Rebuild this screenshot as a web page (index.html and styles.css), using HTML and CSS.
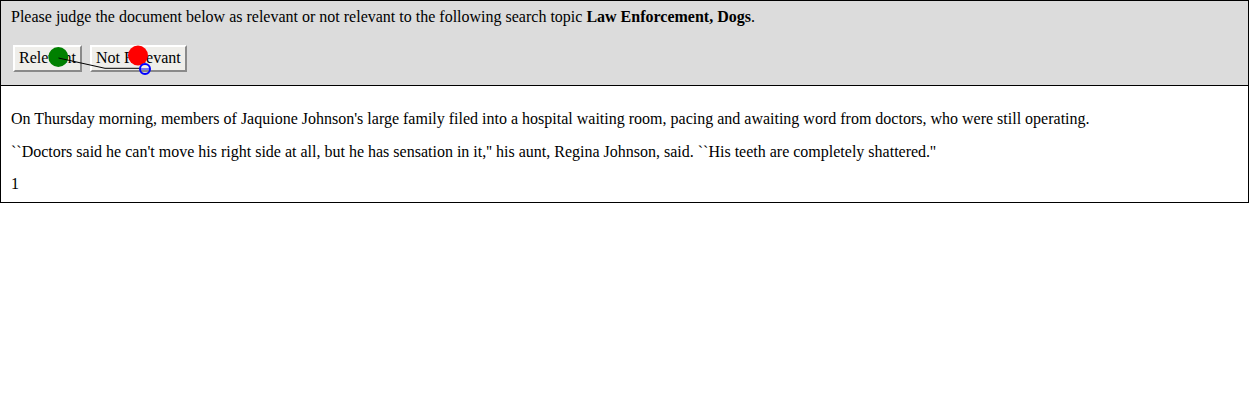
FILE: index.html
```html
<!DOCTYPE html>
<html>
<head>
<meta charset="utf-8">
<link rel="stylesheet" href="styles.css">
</head>
<body>
<div class="header">
  <div class="prompt">Please judge the document below as relevant or not relevant to the following search topic <b>Law Enforcement, Dogs</b>.</div>
  <div class="buttons">
    <button class="btn">Relevant</button>
    <button class="btn">Not Relevant</button>
  </div>
</div>
<div class="doc">
  <p>On Thursday morning, members of Jaquione Johnson's large family filed into a hospital waiting room, pacing and awaiting word from doctors, who were still operating.</p>
  <p>``Doctors said he can't move his right side at all, but he has sensation in it,'' his aunt, Regina Johnson, said. ``His teeth are completely shattered.''</p>
  <p>1</p>
</div>
<svg class="overlay" width="1249" height="400" viewBox="0 0 1249 400">
  <circle cx="58.3" cy="57" r="10" fill="#008000"/>
  <circle cx="138" cy="55.5" r="10" fill="#ff0000"/>
  <polyline points="58.5,58 105,68.3 141,68.3" fill="none" stroke="#000" stroke-width="1"/>
  <circle cx="145" cy="69" r="5" fill="none" stroke="#0000ff" stroke-width="2"/>
  <line x1="140.5" y1="69" x2="149.5" y2="69" stroke="#0000ff" stroke-width="1"/>
</svg>
</body>
</html>
```

FILE: styles.css
```css
html, body {
  margin: 0;
  padding: 0;
  background: #fff;
}
body {
  position: relative;
  font-family: "Liberation Serif", "Times New Roman", serif;
  font-size: 16px;
  line-height: 17px;
  color: #000;
}
.header {
  background: #dcdcdc;
  border: 1px solid #000;
  padding: 7px 10px 13px 10px;
}
.prompt {
  line-height: 17px;
}
.buttons {
  display: flex;
  gap: 8px;
  margin-top: 20px;
  padding-left: 2px;
}
.btn {
  font-family: "Liberation Serif", "Times New Roman", serif;
  font-size: 16px;
  line-height: 17px;
  height: 27px;
  box-sizing: border-box;
  padding: 2px 4px 4px 4px;
  margin: 0;
  background: #efeeea;
  color: #000;
  border-width: 2px;
  border-style: solid;
  border-color: #fff #8a8a8a #8a8a8a #fff;
}
.doc {
  border: 1px solid #000;
  border-top: none;
  padding: 24px 10px 10px 10px;
  display: flex;
  flex-direction: column;
  gap: 15.5px;
}
.doc p {
  margin: 0;
  line-height: 17px;
}
.overlay {
  position: absolute;
  top: 0;
  left: 0;
  pointer-events: none;
}
```
